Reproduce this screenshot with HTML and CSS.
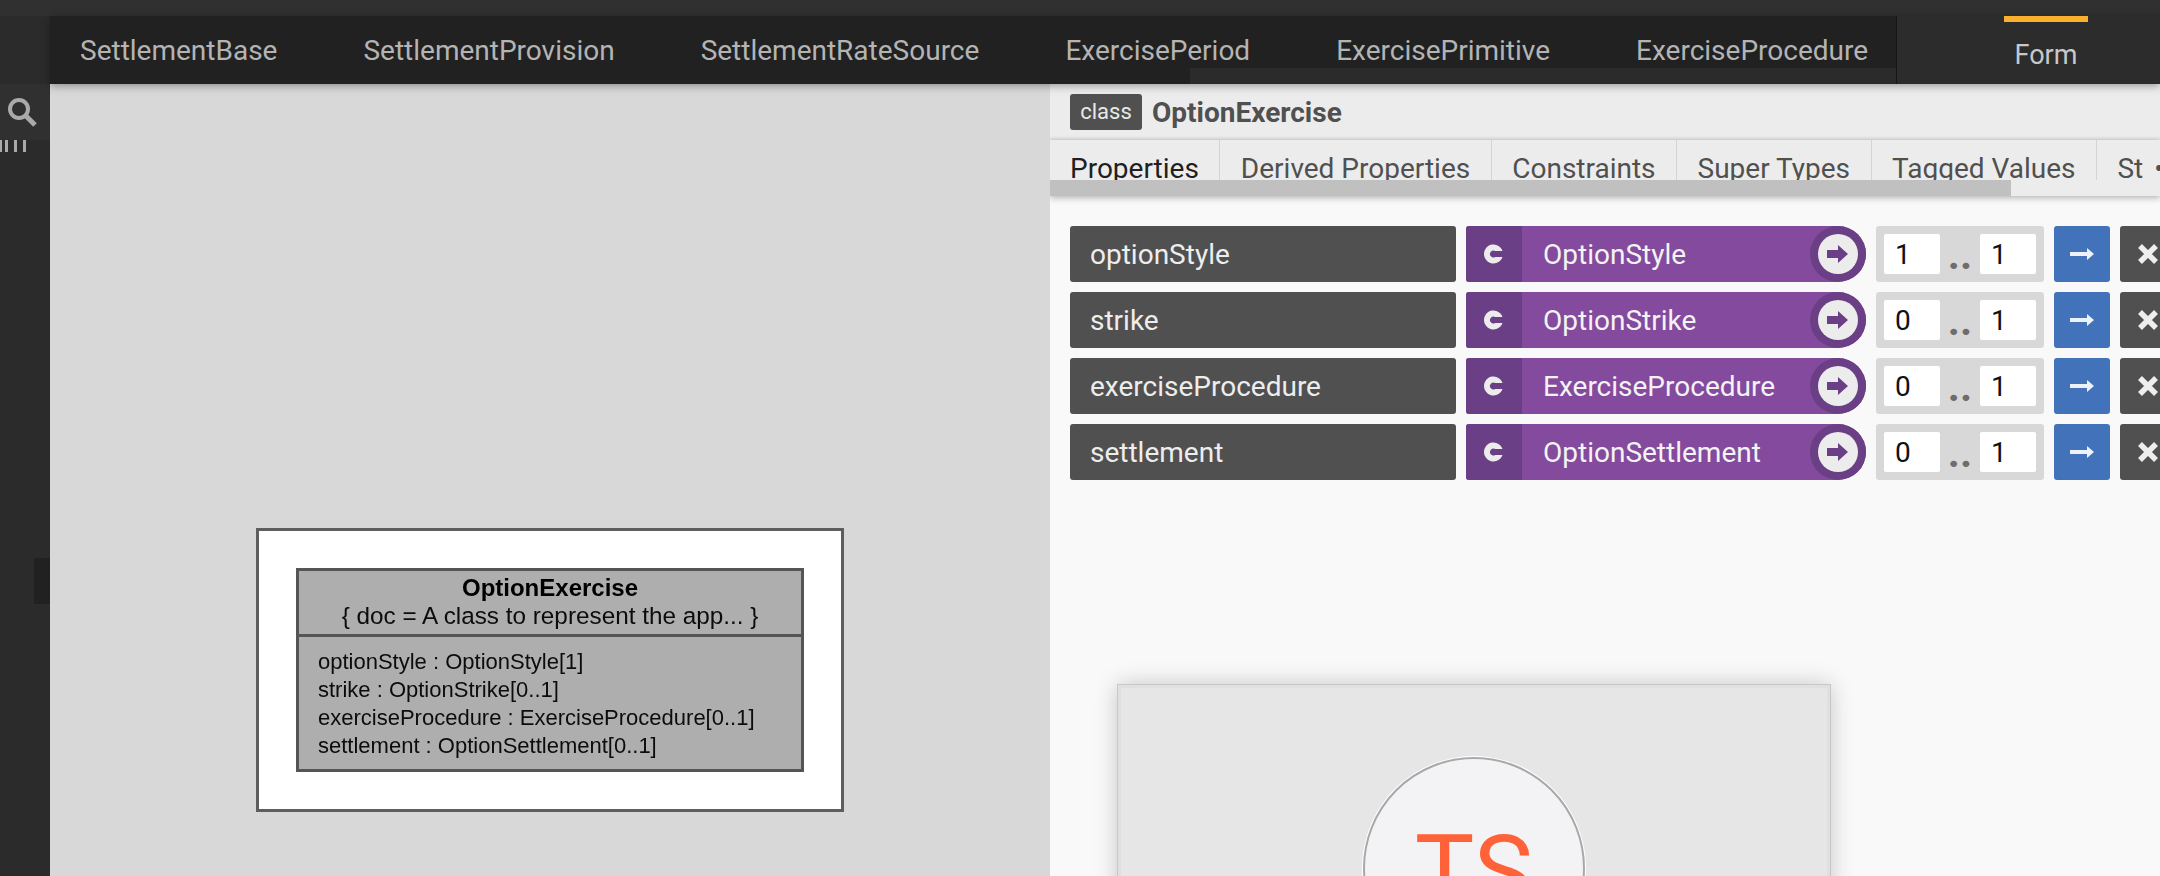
FILE: index.html
```html
<!DOCTYPE html>
<html lang="en">
<head>
    <meta charset="UTF-8">
    <meta name="viewport" content="width=device-width, initial-scale=1.0">
    <title>OptionExercise</title>
    <link rel="stylesheet" href="styles.css">
</head>
<body>
    <div class="top-strip"></div>
    <div class="workspace">
        <aside class="sidebar">
            <div class="sidebar-notch"></div>
            <div class="search-box">
                <svg class="search-icon" width="30" height="30" viewBox="0 0 30 30">
                    <circle cx="11" cy="11" r="9" fill="none" stroke="#aaa" stroke-width="4"/>
                    <path d="M18 18l9 9" stroke="#aaa" stroke-width="5"/>
                </svg>
            </div>
            <div class="clipped-label"><span></span><span></span><span></span><span></span></div>
        </aside>
        <div class="content">
            <nav class="tab-bar">
                <div class="tab-list">
                    <span>SettlementBase</span>
                    <span>SettlementProvision</span>
                    <span>SettlementRateSource</span>
                    <span>ExercisePeriod</span>
                    <span>ExercisePrimitive</span>
                    <span>ExerciseProcedure</span>
                    <div class="tab-scroll"></div>
                </div>
                <div class="form-tab"><span>Form</span></div>
            </nav>
            <div class="panels">
                <section class="diagram">
                    <div class="diagram-frame">
                        <div class="uml-class">
                            <div class="uml-head">
                                <div class="uml-name">OptionExercise</div>
                                <div class="uml-doc">{ doc = A class to represent the app... }</div>
                            </div>
                            <div class="uml-body">
                                <div>optionStyle : OptionStyle[1]</div>
                                <div>strike : OptionStrike[0..1]</div>
                                <div>exerciseProcedure : ExerciseProcedure[0..1]</div>
                                <div>settlement : OptionSettlement[0..1]</div>
                            </div>
                        </div>
                    </div>
                </section>
                <section class="editor">
                    <header class="editor-head">
                        <span class="badge">class</span>
                        <span class="class-name">OptionExercise</span>
                    </header>
                    <div class="editor-tabs">
                        <div class="editor-tab-row">
                            <div class="editor-tab active">Properties</div>
                            <div class="editor-tab">Derived Properties</div>
                            <div class="editor-tab">Constraints</div>
                            <div class="editor-tab">Super Types</div>
                            <div class="editor-tab">Tagged Values</div>
                            <div class="editor-tab">St<span class="tab-more">•</span></div>
                        </div>
                        <div class="scroll-track"><div class="scroll-thumb"></div></div>
                    </div>
                    <div class="rows">
                        <div class="row">
                            <div class="prop-name">optionStyle</div>
                            <div class="prop-type">
                                <div class="type-icon"><svg width="20" height="20" viewBox="0 0 20 20"><path d="M18.5 7A9.5 9.5 0 1 0 18.5 13H11.3A3.5 3.5 0 1 1 11.3 7z" fill="#ececec"/></svg></div>
                                <div class="type-name">OptionStyle</div>
                                <div class="type-link"><div class="type-link-inner"><svg width="22" height="18" viewBox="0 0 22 18"><path d="M0 5h11V0l10 9-10 9v-5H0z" fill="#6b3f85"/></svg></div></div>
                            </div>
                            <div class="multiplicity"><div class="bound">1</div><div class="dots">..</div><div class="bound">1</div></div>
                            <button class="btn btn-blue"><svg width="24" height="14" viewBox="0 0 24 14"><path d="M0 5h17V1l7 6-7 6V9H0z" fill="#eef2f8"/></svg></button>
                            <button class="btn btn-dark"><svg width="24" height="24" viewBox="0 0 24 24"><path d="M4 4l16 16M20 4L4 20" stroke="#eee" stroke-width="5.5"/></svg></button>
                        </div>
                        <div class="row">
                            <div class="prop-name">strike</div>
                            <div class="prop-type">
                                <div class="type-icon"><svg width="20" height="20" viewBox="0 0 20 20"><path d="M18.5 7A9.5 9.5 0 1 0 18.5 13H11.3A3.5 3.5 0 1 1 11.3 7z" fill="#ececec"/></svg></div>
                                <div class="type-name">OptionStrike</div>
                                <div class="type-link"><div class="type-link-inner"><svg width="22" height="18" viewBox="0 0 22 18"><path d="M0 5h11V0l10 9-10 9v-5H0z" fill="#6b3f85"/></svg></div></div>
                            </div>
                            <div class="multiplicity"><div class="bound">0</div><div class="dots">..</div><div class="bound">1</div></div>
                            <button class="btn btn-blue"><svg width="24" height="14" viewBox="0 0 24 14"><path d="M0 5h17V1l7 6-7 6V9H0z" fill="#eef2f8"/></svg></button>
                            <button class="btn btn-dark"><svg width="24" height="24" viewBox="0 0 24 24"><path d="M4 4l16 16M20 4L4 20" stroke="#eee" stroke-width="5.5"/></svg></button>
                        </div>
                        <div class="row">
                            <div class="prop-name">exerciseProcedure</div>
                            <div class="prop-type">
                                <div class="type-icon"><svg width="20" height="20" viewBox="0 0 20 20"><path d="M18.5 7A9.5 9.5 0 1 0 18.5 13H11.3A3.5 3.5 0 1 1 11.3 7z" fill="#ececec"/></svg></div>
                                <div class="type-name">ExerciseProcedure</div>
                                <div class="type-link"><div class="type-link-inner"><svg width="22" height="18" viewBox="0 0 22 18"><path d="M0 5h11V0l10 9-10 9v-5H0z" fill="#6b3f85"/></svg></div></div>
                            </div>
                            <div class="multiplicity"><div class="bound">0</div><div class="dots">..</div><div class="bound">1</div></div>
                            <button class="btn btn-blue"><svg width="24" height="14" viewBox="0 0 24 14"><path d="M0 5h17V1l7 6-7 6V9H0z" fill="#eef2f8"/></svg></button>
                            <button class="btn btn-dark"><svg width="24" height="24" viewBox="0 0 24 24"><path d="M4 4l16 16M20 4L4 20" stroke="#eee" stroke-width="5.5"/></svg></button>
                        </div>
                        <div class="row">
                            <div class="prop-name">settlement</div>
                            <div class="prop-type">
                                <div class="type-icon"><svg width="20" height="20" viewBox="0 0 20 20"><path d="M18.5 7A9.5 9.5 0 1 0 18.5 13H11.3A3.5 3.5 0 1 1 11.3 7z" fill="#ececec"/></svg></div>
                                <div class="type-name">OptionSettlement</div>
                                <div class="type-link"><div class="type-link-inner"><svg width="22" height="18" viewBox="0 0 22 18"><path d="M0 5h11V0l10 9-10 9v-5H0z" fill="#6b3f85"/></svg></div></div>
                            </div>
                            <div class="multiplicity"><div class="bound">0</div><div class="dots">..</div><div class="bound">1</div></div>
                            <button class="btn btn-blue"><svg width="24" height="14" viewBox="0 0 24 14"><path d="M0 5h17V1l7 6-7 6V9H0z" fill="#eef2f8"/></svg></button>
                            <button class="btn btn-dark"><svg width="24" height="24" viewBox="0 0 24 24"><path d="M4 4l16 16M20 4L4 20" stroke="#eee" stroke-width="5.5"/></svg></button>
                        </div>
                    </div>
                    <div class="logo-card">
                        <div class="logo-circle">TS</div>
                    </div>
                </section>
            </div>
        </div>
    </div>
</body>
</html>
```

FILE: styles.css
```css
* {
    box-sizing: border-box;
}

html, body {
    height: 876px;
    overflow: hidden;
}

body {
    margin: 0;
    font-family: Roboto, sans-serif;
    background-color: #2c2c2c;
}

.top-strip {
    height: 16px;
    background-color: #303030;
}

.workspace {
    display: flex;
    height: 860px;
}

/* left rail */
.sidebar {
    position: relative;
    flex: 0 0 50px;
    padding-top: 68px;
    background-color: #2b2b2b;
}

.sidebar-notch {
    position: absolute;
    left: 34px;
    top: 542px;
    width: 16px;
    height: 46px;
    background-color: #212121;
}

.search-box {
    height: 56px;
    padding: 14px 0 0 8px;
    background-color: #303030;
}

.search-icon {
    display: block;
}

.clipped-label {
    display: flex;
    gap: 6px;
    height: 12px;
}

.clipped-label span {
    width: 3px;
    background-color: #aaa;
}

.clipped-label span:first-child {
    width: 2px;
    margin-right: -3px;
}

/* top tabs */
.content {
    flex: 1;
    min-width: 0;
}

.tab-bar {
    position: relative;
    z-index: 2;
    display: flex;
    height: 68px;
    box-shadow: 0 2px 8px rgba(0, 0, 0, 0.35);
}

.tab-list {
    position: relative;
    display: flex;
    gap: 86px;
    flex: 0 0 1847px;
    padding: 19px 0 0 30px;
    border-right: 1px solid #171717;
    background-color: #212121;
    color: #b4b4b4;
    font-size: 28px;
    line-height: 32px;
    white-space: nowrap;
}

.tab-scroll {
    position: absolute;
    right: 0;
    bottom: 0;
    width: 706px;
    height: 16px;
    background-color: #2b2b2b;
}

.form-tab {
    flex: 1;
    padding-left: 107px;
    background-color: #2c2c2c;
    color: #c8c8c8;
    font-size: 27px;
}

.form-tab span {
    display: block;
    width: 84px;
    height: 68px;
    padding-top: 17px;
    border-top: 6px solid #fbb02d;
    text-align: center;
    line-height: 32px;
}

.panels {
    display: flex;
    height: 792px;
}

/* diagram side */
.diagram {
    flex: 0 0 1000px;
    display: flex;
    justify-content: center;
    padding-top: 444px;
    background-color: #d8d8d8;
}

.diagram-frame {
    width: 588px;
    height: 284px;
    padding: 37px 37px;
    border: 3px solid #5e5e5e;
    background-color: #fff;
    filter: blur(0.7px);
}

.uml-class {
    width: 508px;
    height: 204px;
    border: 3px solid #555;
    background-color: #aeaeae;
    color: #0c0c0c;
    font-family: "Liberation Sans", Arial, sans-serif;
    font-size: 22px;
    line-height: 28px;
}

.uml-head {
    height: 66px;
    padding-top: 3px;
    border-bottom: 3px solid #555;
    text-align: center;
    font-size: 24px;
}

.uml-name {
    font-weight: 700;
    color: #000;
}

.uml-doc {
    font-size: 24.3px;
}

.uml-body {
    padding: 11px 19px;
}

/* editor side */
.editor {
    position: relative;
    flex: 1;
    min-width: 0;
    overflow: hidden;
    background-color: #f9f9f9;
}

.editor-head {
    display: flex;
    align-items: center;
    gap: 10px;
    height: 56px;
    padding-left: 20px;
    background-color: #ececec;
}

.badge {
    width: 72px;
    height: 36px;
    border-radius: 3px;
    background-color: #505050;
    color: #e8e8e8;
    font-size: 22px;
    line-height: 35px;
    text-align: center;
}

.class-name {
    color: #505050;
    font-size: 28px;
    font-weight: 700;
}

.editor-tabs {
    box-shadow: 0 -1px 4px rgba(0, 0, 0, 0.16), 0 3px 6px rgba(0, 0, 0, 0.2);
    background-color: #ececec;
}

.editor-tab-row {
    display: flex;
    height: 40px;
    overflow: hidden;
    white-space: nowrap;
}

.editor-tab {
    flex: none;
    height: 50px;
    padding: 13px 20.5px 0;
    border-right: 1px solid #d4d4d4;
    color: #505050;
    font-size: 28px;
    line-height: 32px;
}

.editor-tab.active {
    padding-left: 20px;
    color: #1f1f1f;
}

.tab-more {
    margin-left: 11px;
}

.scroll-track {
    height: 16px;
}

.scroll-thumb {
    width: 961px;
    height: 16px;
    background-color: #c0c0c0;
}

.rows {
    display: flex;
    flex-direction: column;
    gap: 10px;
    padding: 30px 0 0 20px;
}

.row {
    display: flex;
    gap: 10px;
    height: 56px;
}

.prop-name {
    flex: 0 0 386px;
    padding-left: 20px;
    border-radius: 3px;
    background-color: #505050;
    color: #ededed;
    font-size: 28px;
    line-height: 57px;
}

.prop-type {
    display: flex;
    flex: 0 0 400px;
    border-radius: 3px 28px 28px 3px;
    background-color: #834a9d;
    color: #f3f3f3;
    font-size: 28px;
    line-height: 57px;
}

.type-icon {
    display: flex;
    align-items: center;
    justify-content: center;
    flex: 0 0 56px;
    border-radius: 3px 0 0 3px;
    background-color: #6b3f85;
}

.type-name {
    flex: 1;
    padding-left: 21px;
}

.type-link {
    display: flex;
    align-items: center;
    justify-content: center;
    flex: 0 0 56px;
    border-radius: 50%;
    background-color: #6b3f85;
}

.type-link-inner {
    display: flex;
    align-items: center;
    justify-content: center;
    width: 40px;
    height: 40px;
    border-radius: 50%;
    background-color: #ececec;
}

.multiplicity {
    display: flex;
    align-items: center;
    flex: 0 0 168px;
    padding: 0 8px;
    border-radius: 3px;
    background-color: #d8d8d8;
}

.bound {
    width: 56px;
    height: 40px;
    padding-left: 11px;
    border-radius: 2px;
    background-color: #fff;
    color: #111;
    font-size: 28px;
    line-height: 41px;
}

.dots {
    flex: 1;
    padding-top: 2px;
    color: #6d6d6d;
    font-size: 42px;
    font-weight: 700;
    line-height: 40px;
    text-align: center;
}

.btn {
    display: flex;
    align-items: center;
    justify-content: center;
    flex: 0 0 56px;
    padding: 0;
    border: none;
    border-radius: 3px;
}

.btn-blue {
    background-color: #4272b9;
}

.btn-dark {
    background-color: #505050;
}

/* logo card, runs off the bottom of the window */
.logo-card {
    display: flex;
    justify-content: center;
    width: 712px;
    height: 400px;
    margin: 205px 0 0 68px;
    padding-top: 69px;
    border: 3px solid #e0e0e0;
    background-color: #e6e6e6;
    outline: 1px solid #c8c8c8;
    box-shadow: 0 0 22px rgba(0, 0, 0, 0.22);
}

.logo-circle {
    width: 222px;
    height: 222px;
    padding-top: 63px;
    border: 2px solid #a8a8a8;
    border-radius: 50%;
    background-color: #f3f3f6;
    box-shadow: 0 0 0 1px #fff;
    color: #ff6239;
    font-size: 100px;
    line-height: 100px;
    text-align: center;
}
```
